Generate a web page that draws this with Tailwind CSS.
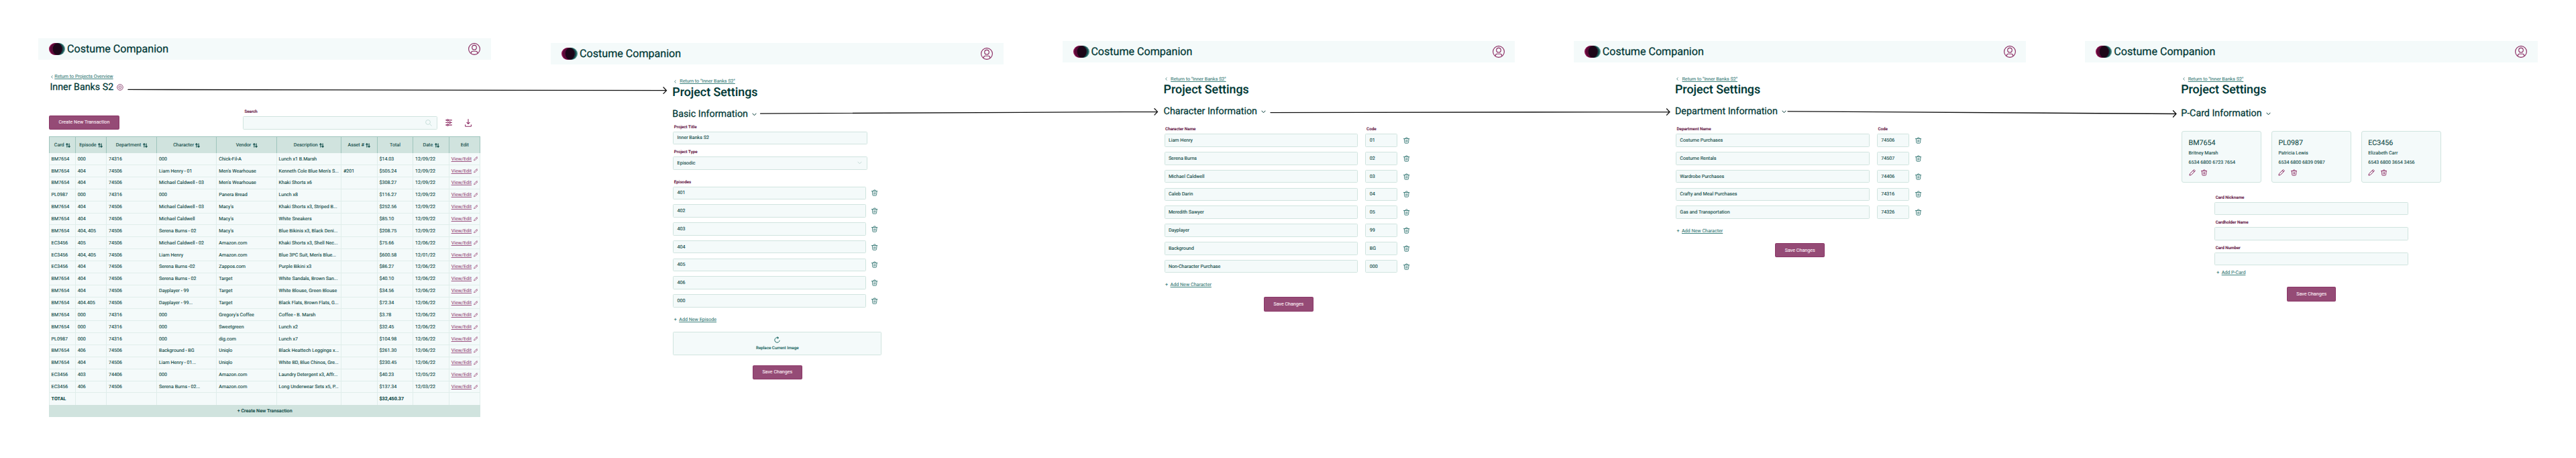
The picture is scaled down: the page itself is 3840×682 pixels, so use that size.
<!DOCTYPE html>
<html lang="en">
<head>
<meta charset="utf-8">
<title>Costume Companion – project settings flow</title>
<script src="https://cdn.jsdelivr.net/npm/@tailwindcss/browser@4"></script>
</head>
<body class="bg-white">
<svg class="hidden">
  <symbol id="logo" viewBox="0 0 24 18"><circle cx="15" cy="9" r="9" fill="#4f908b"/><circle cx="13.4" cy="9" r="9" fill="#174a4c"/><circle cx="9" cy="9" r="9" fill="#8c1550"/><circle cx="10.6" cy="9" r="9" fill="#5a0a38"/><ellipse cx="12.7" cy="9" rx="7" ry="8.8" fill="#1c0618"/></symbol>
  <symbol id="user" viewBox="0 0 18 18"><g fill="none" stroke="#8b2a62" stroke-width="1.15"><circle cx="9" cy="9" r="8.4"/><circle cx="9" cy="6.7" r="3.3"/><path d="M4.3 15.6v-.9a2.6 2.6 0 0 1 2.6-2.5h4.2a2.6 2.6 0 0 1 2.6 2.5v.9"/></g></symbol>
  <symbol id="gear" viewBox="0 0 10 10"><g fill="none" stroke="#93507a"><circle cx="5" cy="5" r="4.3" stroke-width="1"/><circle cx="5" cy="5" r="2.1" stroke-width=".9"/></g><circle cx="5" cy="5" r=".6" fill="#93507a"/></symbol>
  <symbol id="sort" viewBox="0 0 7 7"><path d="M1.9 6.4V1M.3 2.4 1.9.8l1.6 1.6M5.1.6V6M3.5 4.6l1.6 1.6 1.6-1.6" fill="none" stroke="#0b4a46" stroke-width="1.1"/></symbol>
  <symbol id="pencil" viewBox="0 0 10 10"><path d="M.9 9.1 1.5 6.6 7 1.1a.9.9 0 0 1 1.3 0l.6.6a.9.9 0 0 1 0 1.3L3.4 8.5ZM6.1 2l1.9 1.9" fill="none" stroke="currentColor" stroke-width="1" stroke-linejoin="round"/></symbol>
  <symbol id="trash" viewBox="0 0 10 10"><path d="M.5 2.4h9M3.2 2.3C3.2 1.2 3.8.6 5 .6s1.8.6 1.8 1.7M1.4 2.5l.6 6.1c.1.6.4.9 1 .9h4c.6 0 .9-.3 1-.9l.6-6.1M4.1 4.6v2.8M5.9 4.6v2.8" fill="none" stroke="currentColor" stroke-width=".95" stroke-linecap="round"/></symbol>
  <symbol id="filter" viewBox="0 0 10 11"><g fill="none" stroke="#8b2a62" stroke-width="1.1"><path d="M.2 1.9h1.9M4.7 1.9h5.1M.2 5.5h4.9M7.8 5.5h2M.2 9.1h1.9M4.7 9.1h5.1"/><circle cx="3.4" cy="1.9" r="1.2"/><circle cx="6.5" cy="5.5" r="1.2"/><circle cx="3.4" cy="9.1" r="1.2"/></g></symbol>
  <symbol id="download" viewBox="0 0 10 12"><path d="M5 .2v7.2M2.6 5.1 5 7.5l2.4-2.4M.6 8.6v2c0 .4.3.7.7.7h7.4c.4 0 .7-.3.7-.7v-2" fill="none" stroke="#8b2a62" stroke-width="1.1"/></symbol>
  <symbol id="search" viewBox="0 0 10 10"><path d="M6.5 6.5 9.6 9.6" stroke="#c3dbd6" stroke-width=".9"/><circle cx="4" cy="4" r="3.4" fill="none" stroke="#c3dbd6" stroke-width=".9"/></symbol>
  <symbol id="down" viewBox="0 0 7 5"><path d="m.6.8 2.9 3L6.4.8" fill="none" stroke="currentColor" stroke-width="1"/></symbol>
  <symbol id="back" viewBox="0 0 3 5"><path d="M2.5.5.6 2.5l1.9 2" fill="none" stroke="#2f7470" stroke-width=".8"/></symbol>
  <symbol id="reload" viewBox="0 0 9 10"><path d="M6.9 2.5A3.7 3.7 0 1 0 8.2 5.8M4.2 1.9h2L4.9.3M6.2 1.9 4.9 3.6" fill="none" stroke="#1f6a66" stroke-width="1"/></symbol>
</svg>

<main id="board" class="relative flex h-[682px] w-[3840px] items-start overflow-hidden bg-white pl-[57.3px] font-[Roboto,sans-serif] text-[7.14px] leading-[10px] text-[#124c48] [-webkit-text-stroke:0.12px] [text-rendering:geometricPrecision]"></main>

<script>
const icon = (id, cls) => `<svg class="${cls} shrink-0"><use href="#${id}"/></svg>`;
const bar = () => `<header class="flex h-8 items-center justify-between bg-[#f4fafa] pl-4 pr-[15.6px]">
  <div class="flex items-center gap-[2.8px]">${icon('logo', 'h-[18px] w-6')}<span class="text-[16.08px] leading-[18px] text-[#003835] [-webkit-text-stroke:0.25px]">Costume Companion</span></div>${icon('user', 'h-[18px] w-[18px]')}</header>`;
const back = (t, cls = 'gap-[5px] pl-[1.5px]') => `<a class="flex h-[10px] items-center text-[#3f837e] ${cls}">${icon('back', 'h-[5px] w-[3px]')}<span class="underline decoration-[0.5px] underline-offset-1">${t}</span></a>`;
const add = t => `<a class="flex h-[10px] items-center gap-[3.5px] pl-[1.5px] text-[#3f837e]"><span class="font-medium">+</span><span class="underline decoration-[0.5px] underline-offset-1">${t}</span></a>`;
const label = (t, cls = 'pl-[1.5px]') => `<label class="block h-2 text-[6.24px] leading-2 font-medium text-[#5d0c3b] ${cls}">${t}</label>`;
const field = (t, cls, extra = '') => `<div class="flex h-[19.6px] items-center justify-between rounded-[1.5px] border border-[#d0e4df] bg-[#f4fafa] pl-[5.3px] pr-[5px] ${cls}"><span>${t}</span>${extra}</div>`;
const button = (t, cls) => `<button class="flex h-[21.5px] items-center justify-center rounded-[1.5px] border border-[#8a3566] bg-[#954b76] text-[#f6e6ef] ${cls}">${t}</button>`;
const title = () => `<h1 class="text-[17.82px] leading-[22px] font-medium text-[#003835]">Project Settings</h1>`;
const section = (t, cls) => `<h2 class="flex items-center gap-[6px] text-[14.28px] leading-[18px] text-[#003835] [-webkit-text-stroke:0.25px] ${cls}">${t}${icon('down', 'mt-px h-[5px] w-[7px]')}</h2>`;
const frame = (cls, body) => `<section class="flex w-[674.5px] shrink-0 flex-col ${cls}">${bar()}${body}</section>`;

/* Transactions */
const cols = 'grid grid-cols-[39.2px_46.2px_75px_89.3px_89.3px_96.4px_53.5px_53.6px_53.6px_46.9px]';
const heads = ['Card', 'Episode', 'Department', 'Character', 'Vendor', 'Description', 'Asset #', 'Total', 'Date', 'Edit'];
const rows = `BM7654|000|74316|000|Chick-Fil-A|Lunch x1 B.Marsh||$14.03|12/09/22
BM7654|404|74506|Liam Henry - 01|Men's Wearhouse|Kenneth Cole Blue Men's S...|#201|$505.24|12/09/22
BM7654|404|74506|Michael Caldwell - 03|Men's Wearhouse|Khaki Shorts x6||$308.27|12/09/22
PL0987|000|74316|000|Panera Bread|Lunch x8||$116.27|12/09/22
BM7654|404|74506|Michael Caldwell - 03|Macy's|Khaki Shorts x3, Striped B...||$252.56|12/09/22
BM7654|404|74506|Michael Caldwell|Macy's|White Sneakers||$85.10|12/09/22
BM7654|404, 405|74506|Serena Burns - 02|Macy's|Blue Bikinis x3, Black Deni...||$208.75|12/09/22
EC3456|405|74506|Michael Caldwell - 02|Amazon.com|Khaki Shorts x3, Shell Nec...||$75.66|12/06/22
EC3456|404, 405|74506|Liam Henry|Amazon.com|Blue 3PC Suit, Men's Blue...||$600.58|12/01/22
EC3456|404|74506|Serena Burns -02|Zappos.com|Purple Bikini x3||$86.27|12/06/22
BM7654|404|74506|Serena Burns - 02|Target|White Sandals, Brown San...||$40.10|12/06/22
BM7654|404|74506|Dayplayer - 99|Target|White Blouse, Green Blouse||$34.56|12/06/22
BM7654|404.405|74506|Dayplayer - 99...|Target|Black Flats, Brown Flats, G...||$72.34|12/06/22
BM7654|000|74316|000|Gregory's Coffee|Coffee - B. Marsh||$3.78|12/06/22
BM7654|000|74316|000|Sweetgreen|Lunch x2||$32.45|12/06/22
PL0987|000|74316|000|dig.com|Lunch x7||$104.98|12/06/22
BM7654|406|74506|Background - BG|Uniqlo|Black Heattech Leggings x...||$261.30|12/06/22
BM7654|404|74506|Liam Henry - 01...|Uniqlo|White BD, Blue Chinos, Gre...||$230.45|12/06/22
EC3456|403|74406|000|Amazon.com|Laundry Detergent x3, Affr...||$40.23|12/05/22
EC3456|406|74506|Serena Burns - 02...|Amazon.com|Long Underwear Sets x5, P...||$137.34|12/03/22`.split('\n').map(r => r.split('|'));
const cell = t => `<div class="flex items-center border-l border-[#e0eeeb] pl-[2.8px] whitespace-nowrap">${t}</div>`;
const edit = `<span class="text-[#9c5583] underline decoration-[0.5px] underline-offset-1">View/Edit</span>${icon('pencil', 'ml-[2.6px] h-[6.5px] w-[6.5px] text-[#8b2a62]')}`;
const row = (cells, cls) => `<div class="${cols} h-[17.86px] border-r border-[#e0eeeb] bg-[#f4fafa] ${cls}">${cells.map(cell).join('')}</div>`;

const transactions = frame('mt-[57px]', `
  <div class="mt-5 flex flex-col pl-[17.2px]">
    ${back('Return to Projects Overview', 'gap-[2.3px] pl-[1.5px]')}
    <h1 class="mt-[2px] flex items-center gap-[5px] text-[14.28px] leading-[18px] text-[#003835] [-webkit-text-stroke:0.25px]">Inner Banks S2${icon('gear', 'h-[10px] w-[10px]')}</h1>
  </div>
  <div class="mt-[23px] flex h-[31px] items-end pl-[15.7px]">
    ${button('Create New Transaction', 'w-[105px]')}
    <div class="ml-[184px] flex w-[290px] flex-col gap-[3px]">${label('Search', 'pl-[2.5px]')}${field('', 'w-full', icon('search', 'mr-[2px] h-[10px] w-[10px]'))}</div>
    ${icon('filter', 'mb-[5.5px] ml-[12.4px] h-[11px] w-[10px]')}
    ${icon('download', 'mb-[4.5px] ml-[18.5px] h-3 w-[10px]')}
  </div>
  <div class="mt-[10px] ml-[15.5px] w-[643.7px]">
    <div class="${cols} h-[25.3px] border-t border-r border-[#9fc5bd] bg-[#d0e3de]">${heads.map(h => `<div class="flex items-center justify-center gap-[2.4px] border-l border-[#9fc5bd]">${h}${h === 'Total' || h === 'Edit' ? '' : icon('sort', 'h-[7px] w-[7px]')}</div>`).join('')}</div>
    ${rows.map(r => row([...r, edit], 'border-b')).join('')}
    ${row(['TOTAL', '', '', '', '', '', '', '$32,450.37', '', ''], 'font-bold')}
    <div class="flex h-[17.8px] items-center justify-center bg-[#d0e3de] font-medium">+ Create New Transaction</div>
  </div>`);

/* Basic information */
const bin = icon('trash', 'h-[10px] w-[9.4px] text-[#2f7470]');
const basic = frame('mt-[64px] ml-[89.5px]', `
  <div class="mt-5 ml-[182px] flex w-[311px] flex-col">
    ${back('Return to "Inner Banks S2"', 'gap-[5px] pl-[2px]')}
    <div class="mt-px -ml-px">${title()}${section('Basic Information', 'mt-[11.5px]')}</div>
    ${label('Project Title', 'mt-[6px] pl-[1.5px]')}
    ${field('Inner Banks S2', 'mt-[3px] w-[289.3px]')}
    ${label('Project Type', 'mt-[7px] pl-[1.5px]')}
    ${field('Episodic', 'mt-[3px] w-[289.3px]', icon('down', 'mr-[1.5px] h-[5px] w-[7px] text-[#c3dbd6]'))}
    ${label('Episodes', 'mt-[14px] pl-[1.5px]')}
    <div class="mt-[3px] flex flex-col gap-[7.15px]">${['401', '402', '403', '404', '405', '406', '000'].map(e => `<div class="flex items-center gap-[8.6px]">${field(e, 'w-[287.5px]')}${bin}</div>`).join('')}</div>
    <div class="mt-[13.5px]">${add('Add New Episode')}</div>
    <div class="mt-[12.5px] flex h-[35.5px] flex-col items-center justify-center gap-[3px] rounded-[1.5px] border border-[#d0e4df] bg-[#f4fafa] text-[6.24px] leading-2 font-medium text-[#1f6a66]">${icon('reload', 'h-[10px] w-[9px]')}Replace Current Image</div>
    ${button('Save Changes', 'mt-[14.5px] w-[73.6px] self-center')}
  </div>`);

/* Characters and departments share one form */
const codes = (heading, name, list) => `
  <div class="mt-[19.7px] ml-[152px] flex w-[370.5px] flex-col">
    ${back('Return to "Inner Banks S2"')}
    <div class="mt-[0.6px] -ml-px">${title()}${section(heading, 'mt-[11.7px]')}</div>
    <div class="mt-[13px] flex">${label(name, 'w-[300px] pl-[1.5px]')}${label('Code')}</div>
    <div class="mt-[3.3px] flex flex-col gap-[7.2px]">${list.map(([n, c]) => `<div class="flex items-center">${field(n, 'w-[288.7px]')}${field(c, 'ml-[11.2px] w-[48px]')}<span class="ml-[8.7px]">${bin}</span></div>`).join('')}</div>
    <div class="mt-[13px]">${add('Add New Character')}</div>
    ${button('Save Changes', 'mt-[13px] w-[73.6px] self-center')}
  </div>`;
const characters = frame('mt-[61px] ml-[87.8px]', codes('Character Information', 'Character Name', [['Liam Henry', '01'], ['Serena Burns', '02'], ['Michael Caldwell', '03'], ['Caleb Darin', '04'], ['Meredith Sawyer', '05'], ['Dayplayer', '99'], ['Background', 'BG'], ['Non-Character Purchase', '000']]));
const departments = frame('mt-[61px] ml-[87.9px]', codes('Department Information', 'Department Name', [['Costume Purchases', '74506'], ['Costume Rentals', '74507'], ['Wardrobe Purchases', '74406'], ['Crafty and Meal Purchases', '74316'], ['Gas and Transportation', '74326']]));

/* P-Cards */
const card = ([id, name, number]) => `<div class="flex h-[76.5px] w-[119.3px] flex-col rounded-[3px] border border-[#d0e4df] bg-[#f4fafa] pt-[9.2px] pl-[9.4px]">
  <div class="text-[10.7px] leading-[14px]">${id}</div><div class="mt-[3.4px]">${name}</div><div class="mt-[4.2px]">${number}</div>
  <div class="mt-[4.5px] flex items-center gap-[8.4px] text-[#8b2a62]">${icon('pencil', 'h-[10px] w-[10px]')}${icon('trash', 'h-[10px] w-[9.4px]')}</div></div>`;
const pcards = frame('mt-[61px] ml-[88px]', `
  <div class="mt-[19.7px] ml-[143.7px] flex w-[387px] flex-col">
    ${back('Return to "Inner Banks S2"')}
    <div class="mt-[0.6px] -ml-px">${title()}${section('P-Card Information', 'mt-[15.2px]')}</div>
    <div class="mt-[17px] flex justify-between">${[['BM7654', 'Britney Marsh', '6534 6800 6723 7654'], ['PL0987', 'Patricia Lewis', '6534 6800 6839 0987'], ['EC3456', 'Elizabeth Carr', '6543 6800 3654 3456']].map(card).join('')}</div>
    <div class="mt-[17.7px] flex w-[289px] flex-col self-center">
      ${label('Card Nickname')}${field('', 'mt-[3px]')}
      ${label('Cardholder Name', 'mt-[7px] pl-[1.5px]')}${field('', 'mt-[3px]')}
      ${label('Card Number', 'mt-[7px] pl-[1.5px]')}${field('', 'mt-[3px]')}
      <div class="mt-[5.8px] pl-[1.5px]">${add('Add P-Card')}</div>
      ${button('Save Changes', 'mt-[16.2px] w-[73.2px] self-center')}
    </div>
  </div>`);

/* Flow connectors between the screens */
const arrows = `<svg class="pointer-events-none absolute inset-0 h-full w-full" fill="none" stroke="#111" stroke-width="1.3" stroke-linecap="round">
  <path d="M191 133.4 993.5 134.7M989 130l4.5 4.7-4.5 4.7"/>
  <path d="M1133.5 169.1 1725.4 166.4M1721 161.7l4.5 4.7-4.5 4.7"/>
  <path d="M1894 167.6 2489 166.7M2484.5 162l4.5 4.7-4.5 4.7"/>
  <path d="M2665 165.8 3244 169.5M3239.5 164.8l4.5 4.7-4.5 4.7"/></svg>`;

document.getElementById('board').innerHTML = transactions + basic + characters + departments + pcards + arrows;
</script>
</body>
</html>
